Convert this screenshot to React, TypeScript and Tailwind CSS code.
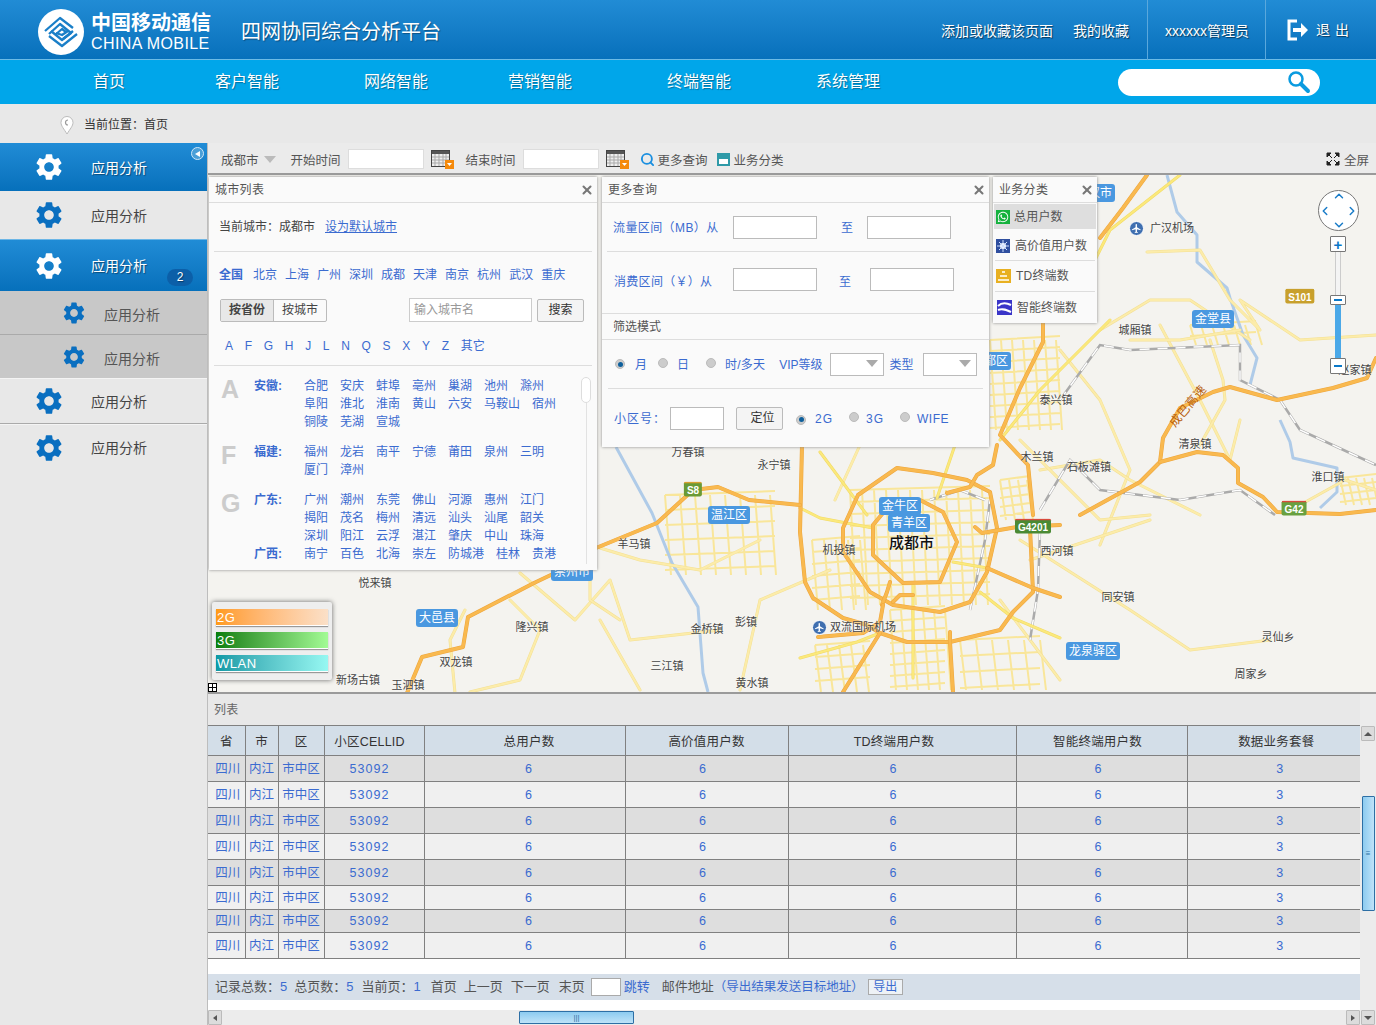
import type { ReactNode } from 'react';
import { FaWhatsapp } from 'react-icons/fa';
import { MdSettings, MdFlight } from 'react-icons/md';
import { Search, ChevronUp, ChevronDown, ChevronLeft, ChevronRight, X } from 'lucide-react';

const highways = [
  'M1080 515L1140 482L1160 462L1163 438L1180 408L1213 392L1230 387L1277 400L1333 388L1367 378L1376 358',
  'M1160 462L1197 452L1223 455L1238 468L1238 483L1263 497L1277 512L1340 514L1376 510',
  'M1147 175L1123 208L1100 238',
  'M1043 318L1043 342L1020 388L1000 435L1028 465L1033 515',
  'M920 500L943 512L957 542L940 582L903 583L873 555L873 525L883 513',
  'M897 468L933 473L967 480L990 492L997 528L987 572L970 602L940 612L893 605L870 592L843 552L843 528L858 495Z',
  'M802 445L800 532L805 582L813 598L843 618L867 625L880 633L907 642L950 642L1000 630L1013 612L1033 592L1030 528',
  'M987 568L1033 588L1060 597M975 527L982 533L1017 527L1060 525',
  'M947 493L970 487L977 475L993 465L997 445',
  'M880 633L843 692M882 605L887 592L890 582M893 602L900 595L913 595',
  'M950 632L950 642L953 692',
  'M818 637L863 633L880 622L883 605',
  'M596 548L657 523L693 490L718 487L749 500L800 505',
  'M407 693L422 657L463 647L468 617L534 583L555 573',
];
const yellows = [
  'M913 585L913 678M820 452L867 515M955 445L937 498',
  'M800 508L820 518L873 528M953 562L987 568M980 592L1013 618L1060 638',
  'M800 658L857 642L880 633M1075 300L1100 250L1110 230L1180 175',
  'M1000 440L1040 390L1090 340L1110 320',
];
const palestreets = [
  'M1147 252L1200 250L1230 300L1260 330L1240 300L1300 340L1376 335',
  'M1100 330L1150 300L1190 300L1250 340',
  'M1060 350L1100 400L1130 470L1100 545',
  'M1160 325L1200 400L1230 460L1240 420',
  'M1210 340L1223 380L1225 400L1200 445',
  'M1040 470L1100 460L1130 480L1200 515',
  'M1020 440L1100 520L1150 515',
  'M1300 505L1345 480L1376 490',
  'M1130 340L1180 340L1240 330',
  'M455 693L450 640L465 610M520 573L575 620L610 580L630 640L720 630',
  'M510 600L540 630L520 680L470 692',
  'M600 548L640 560L700 570L760 540',
  'M590 520L590 600L620 620',
  'M740 690L760 600L830 570',
  'M1000 600L1060 680M1030 560L1150 520',
  'M1020 540L1130 610L1190 650L1270 640',
  'M600 620L640 690M860 445L835 500',
];
const rivers = [
  'M1167 175L1177 212L1197 235L1197 262L1227 288L1230 298L1243 335L1257 358L1250 385',
  'M1280 420L1290 442L1293 458L1337 468L1337 492L1320 508',
  'M616 447L652 513L672 563L698 607L703 673L708 692',
];
const rails = [
  'M1060 400L1100 345L1130 350L1240 345L1240 380L1280 400L1300 430L1376 465',
  'M1040 510L1070 460L1100 490L1180 500L1240 490L1275 515',
  'M1040 530L1038 590L1030 640M985 500L960 490L930 500M970 610L985 540L990 500',
];

function grid(x0: number, y0: number, x1: number, y1: number, step: number) {
  let d = '';
  for (let x = x0; x <= x1; x += step) d += `M${x} ${y0}L${x + 6} ${y1}`;
  for (let y = y0; y <= y1; y += step) d += `M${x0} ${y}L${x1} ${y - 4}`;
  return d;
}

const blocks = [
  grid(665, 495, 775, 575, 15),
  grid(850, 490, 990, 605, 12),
  grid(812, 540, 860, 610, 12),
  grid(815, 645, 870, 692, 12),
  grid(890, 610, 945, 690, 11),
  grid(960, 640, 1040, 690, 16),
  grid(1000, 480, 1030, 520, 9),
  grid(990, 340, 1060, 430, 11),
  grid(1190, 325, 1256, 345, 11),
  grid(1340, 478, 1376, 505, 8),
];

const towns: [string, number, number][] = [
  ['悦来镇', 375, 583], ['隆兴镇', 532, 627], ['双龙镇', 456, 662], ['新场古镇', 358, 680],
  ['玉泗镇', 408, 685], ['羊马镇', 634, 544], ['金桥镇', 707, 629], ['彭镇', 746, 622],
  ['三江镇', 667, 666], ['黄水镇', 752, 683], ['万春镇', 688, 452], ['永宁镇', 774, 465],
  ['机投镇', 839, 550], ['双流国际机场', 863, 627], ['西河镇', 1057, 551], ['同安镇', 1118, 597],
  ['灵仙乡', 1278, 637], ['周家乡', 1251, 674], ['木兰镇', 1037, 457], ['石板滩镇', 1089, 467],
  ['泰兴镇', 1056, 400], ['城厢镇', 1135, 330], ['清泉镇', 1195, 444], ['淮口镇', 1328, 477],
  ['赵家镇', 1355, 370], ['广汉机场', 1172, 228],
];
const districts: [string, number, number][] = [
  ['崇州市', 572, 572], ['金牛区', 900, 506], ['青羊区', 909, 523], ['温江区', 729, 515], ['大邑县', 437, 618],
  ['龙泉驿区', 1093, 651], ['金堂县', 1213, 319], ['郫都区', 990, 361], ['广汉市', 1094, 193],
];

const cityGroups = [
  { letter: 'A', name: '安徽:', rows: [['合肥', '安庆', '蚌埠', '亳州', '巢湖', '池州', '滁州'], ['阜阳', '淮北', '淮南', '黄山', '六安', '马鞍山', '宿州'], ['铜陵', '芜湖', '宣城']], cls: 'mb-3' },
  { letter: 'F', name: '福建:', rows: [['福州', '龙岩', '南平', '宁德', '莆田', '泉州', '三明'], ['厦门', '漳州']], cls: 'mb-3' },
  { letter: 'G', name: '广东:', rows: [['广州', '潮州', '东莞', '佛山', '河源', '惠州', '江门'], ['揭阳', '茂名', '梅州', '清远', '汕头', '汕尾', '韶关'], ['深圳', '阳江', '云浮', '湛江', '肇庆', '中山', '珠海']], cls: '' },
  { letter: '', name: '广西:', rows: [['南宁', '百色', '北海', '崇左', '防城港', '桂林', '贵港']], cls: '' },
];

const rowHeights = ['h-[26px]', 'h-[26px]', 'h-[26px]', 'h-[26px]', 'h-[26px]', 'h-[24px]', 'h-[23px]', 'h-[26px]'];

function Gear({ className }: { className: string }) {
  return <MdSettings className={className} />;
}

function SideItem({ active, sub, className, children }: { active?: boolean; sub?: boolean; className: string; children?: ReactNode }) {
  const tone = active
    ? 'bg-gradient-to-b from-[#208cd6] to-[#0670bb] text-white [text-shadow:1px_1px_1px_#0006]'
    : sub
      ? 'bg-[#c8c8c8] text-[#555]'
      : 'bg-[#e8e8e8] text-[#444]';
  return (
    <div className={`relative flex items-center shrink-0 ${tone} ${className}`}>
      <Gear
        className={`shrink-0 ${active ? 'text-white' : 'text-[#0a6fc0]'} ${sub ? 'ml-[61px] w-[26px] h-[26px]' : 'ml-[33px] w-[32px] h-[32px]'}`}
      />
      <span className={`text-[14px] ${sub ? 'ml-[17px] pt-[5px]' : 'ml-[26px] pt-[2px]'}`}>应用分析</span>
      {children}
    </div>
  );
}

function Calendar() {
  return (
    <svg width="23" height="19" viewBox="0 0 23 19" className="shrink-0">
      <rect x="0.5" y="0.5" width="18" height="16" fill="#eee" stroke="#444" />
      <rect x="1" y="1" width="17" height="3" fill="#555" />
      <path d="M4 4v12M8 4v12M12 4v12M15 4v12M1 7h17M1 10h17M1 13h17" stroke="#a9a9a9" strokeWidth="1" />
      <rect x="14" y="10" width="9" height="9" fill="#f58a0b" />
      <path d="M16 13h5l-2.5 3z" fill="#fff" />
    </svg>
  );
}

function Radio({ on }: { on?: boolean }) {
  return (
    <span className="inline-flex w-[10px] h-[10px] rounded-full items-center justify-center bg-[#ccc] border border-[#bbb] shrink-0">
      {on && <span className="w-[5px] h-[5px] rounded-full bg-[#0d5f9c]" />}
    </span>
  );
}

function Field({ className }: { className: string }) {
  return <div className={`bg-white border border-[#bbb] shrink-0 ${className}`} />;
}

function Picker({ className }: { className: string }) {
  return (
    <div className={`bg-white border border-[#bbb] shrink-0 flex items-start justify-end pr-[5px] pt-[6px] ${className}`}>
      <span className="w-0 h-0 border-x-[6px] border-x-transparent border-t-[7px] border-t-[#aaa]" />
    </div>
  );
}

function PanelHead({ title }: { title: string }) {
  return (
    <div className="h-[26px] border-b border-[#ddd] flex items-center justify-between pl-[6px] pr-[3px] text-[12px] text-[#555]">
      <span className="tracking-[0.3px]">{title}</span>
      <X className="w-[14px] h-[14px] text-[#777]" strokeWidth={3.5} />
    </div>
  );
}

function CityPanel() {
  return (
    <div className="absolute left-[1px] top-[2px] w-[388px] h-[393px] bg-[#fafafa] shadow-[0_0_3px_#888] overflow-hidden z-10">
      <PanelHead title="城市列表" />
      <div className="px-[5px]">
        <div className="h-[49px] border-b border-[#ddd] flex items-center pl-[5px] text-[12px] text-[#444]">
          当前城市：成都市
          <span className="ml-[10px] text-[#3b6bd0] underline">设为默认城市</span>
        </div>
        <div className="flex gap-x-[8px] pl-[5px] pt-[14px] text-[12px] text-[#3b6bd0] h-[46px]">
          <b className="w-[26px]">全国</b>
          {['北京', '上海', '广州', '深圳', '成都', '天津', '南京', '杭州', '武汉', '重庆'].map((c) => (
            <span key={c}>{c}</span>
          ))}
        </div>
        <div className="flex items-center h-[24px] pl-[6px] text-[12px]">
          <div className="flex border border-[#bbb] rounded-[2px] h-[23px] items-center text-[#444]">
            <b className="bg-[#e8e8e8] w-[53px] text-center leading-[21px] border-r border-[#bbb]">按省份</b>
            <span className="w-[52px] text-center">按城市</span>
          </div>
          <div className="ml-[82px] w-[123px] h-[24px] bg-white border border-[#ccc] flex items-center pl-[4px] text-[#999]">输入城市名</div>
          <div className="ml-[5px] w-[47px] h-[23px] bg-[#f4f4f4] border border-[#bbb] rounded-[2px] flex items-center justify-center text-[#333]">搜索</div>
        </div>
        <div className="h-[44px] border-b border-[#ddd] flex items-center gap-x-[11.7px] pl-[11px] pt-[4px] text-[12px] text-[#3b6bd0]">
          {['A', 'F', 'G', 'H', 'J', 'L', 'N', 'Q', 'S', 'X', 'Y', 'Z', '其它'].map((c) => (
            <span key={c}>{c}</span>
          ))}
        </div>
        <div className="pt-[11px] text-[12px] text-[#3b6bd0] leading-[18px]">
          {cityGroups.map((g) => (
            <div key={g.name} className={`flex ${g.cls}`}>
              <span className="w-[40px] pl-[7px] text-[25px] font-bold text-[#ccc] leading-[24px] [font-family:'Liberation_Sans',sans-serif]">{g.letter}</span>
              <b className="w-[50px]">{g.name}</b>
              <div>
                {g.rows.map((r, i) => (
                  <div key={i} className="flex gap-x-[12px]">
                    {r.map((c) => (
                      <span key={c}>{c}</span>
                    ))}
                  </div>
                ))}
              </div>
            </div>
          ))}
        </div>
      </div>
      <div className="absolute left-[377px] top-[200px] bottom-[6px] w-px bg-[#e2e2e2]" />
      <div className="absolute left-[372px] top-[200px] w-[10px] h-[26px] rounded-[5px] bg-white border border-[#ddd]" />
    </div>
  );
}

function MorePanel() {
  return (
    <div className="absolute left-[394px] top-[2px] w-[387px] h-[270px] bg-[#fafafa] shadow-[0_0_3px_#888] text-[12px] text-[#3b6bd0] z-10">
      <PanelHead title="更多查询" />
      <div className="mx-[5px] h-[49px] border-b border-[#ddd] flex items-center pl-[6px]">
        <span className="w-[120px] tracking-[0.4px] pt-[2px]">流量区间（MB）从</span>
        <Field className="w-[84px] h-[23px]" />
        <span className="ml-[24px] w-[26px] pt-[2px]">至</span>
        <Field className="w-[84px] h-[23px]" />
      </div>
      <div className="h-[62px] border-b border-[#ddd] flex items-start pl-[12px] pt-[16px]">
        <span className="w-[119px] tracking-[0.3px] pt-[5px]">消费区间（￥）从</span>
        <Field className="w-[84px] h-[23px]" />
        <span className="ml-[22px] w-[31px] pt-[5px]">至</span>
        <Field className="w-[84px] h-[23px]" />
      </div>
      <div className="h-[26px] border-b border-[#ddd] flex items-center pl-[11px] text-[#555]">筛选模式</div>
      <div className="mx-[6px] h-[49px] border-b border-[#ddd] flex items-center pl-[7px]">
        <Radio on />
        <span className="ml-[10px] pt-[1px]">月</span>
        <span className="ml-[11px]"><Radio /></span>
        <span className="ml-[9px] pt-[1px]">日</span>
        <span className="ml-[17px]"><Radio /></span>
        <span className="ml-[9px] tracking-[0.2px] pt-[1px]">时/多天</span>
        <span className="ml-[14px] pt-[1px]">VIP等级</span>
        <Picker className="ml-[7px] w-[54px] h-[23px]" />
        <span className="ml-[6px] pt-[1px]">类型</span>
        <Picker className="ml-[9px] w-[54px] h-[23px]" />
      </div>
      <div className="h-[56px] flex items-center pl-[12px] pt-[2px]">
        <span className="w-[56px] tracking-[1px] pt-[2px]">小区号：</span>
        <Field className="w-[54px] h-[23px]" />
        <div className="ml-[12px] w-[47px] h-[23px] bg-[#f4f4f4] border border-[#bbb] rounded-[2px] flex items-center justify-center text-[#333] pl-[6px]">定位</div>
        <span className="ml-[13px]"><Radio on /></span>
        <span className="ml-[9px] tracking-[1px] pt-[1px]">2G</span>
        <span className="ml-[16px]"><Radio /></span>
        <span className="ml-[7px] tracking-[1px] pt-[1px]">3G</span>
        <span className="ml-[16px]"><Radio /></span>
        <span className="ml-[7px] tracking-[0.5px] pt-[1px]">WIFE</span>
      </div>
    </div>
  );
}

function BizPanel() {
  return (
    <div className="absolute left-[785px] top-[2px] w-[104px] h-[146px] bg-[#fafafa] shadow-[0_0_3px_#888] text-[12px] text-[#555] z-10">
      <PanelHead title="业务分类" />
      <div className="mx-[1px] mt-[1px] h-[25px] bg-[#dedede] flex items-center pl-[2px]">
        <span className="w-[14px] h-[14px] bg-[#16b23e] flex items-center justify-center text-white"><FaWhatsapp className="w-[12px] h-[12px]" /></span>
        <span className="ml-[4px] tracking-[0.2px]">总用户数</span>
      </div>
      <div className="mx-[2px] mt-[2px] h-[30px] border-b border-[#ddd] flex items-center pl-[1px]">
        <svg width="14" height="14" viewBox="0 0 14 14">
          <rect width="14" height="14" fill="#2f4f9f" />
          <circle cx="7" cy="7" r="3" fill="#fff" />
          <path d="M7 1v12M1 7h12M3 3l8 8M11 3l-8 8" stroke="#cfe0ff" strokeWidth="1" />
        </svg>
        <span className="ml-[5px]">高价值用户数</span>
      </div>
      <div className="mx-[2px] h-[31px] border-b border-[#ddd] flex items-center pl-[1px]">
        <svg width="15" height="14" viewBox="0 0 15 14">
          <rect width="15" height="14" fill="#e8b021" />
          <path d="M6 3h3M4 7h7M2 11h11" stroke="#fff" strokeWidth="1.5" />
        </svg>
        <span className="ml-[5px] tracking-[0.2px]">TD终端数</span>
      </div>
      <div className="h-[31px] flex items-center pl-[4px]">
        <svg width="15" height="15" viewBox="0 0 15 15">
          <rect width="15" height="15" fill="#3a35c8" />
          <path d="M1 6c4-4 9-3 13-1M1 10c5-2 9 0 13 2" stroke="#fff" strokeWidth="2" fill="none" />
        </svg>
        <span className="ml-[5px]">智能终端数</span>
      </div>
    </div>
  );
}

function Legend() {
  const bars = [
    ['2G', 'from-[#ff9a14] to-[#fbe0c8]'],
    ['3G', 'from-[#067f0b] to-[#a2fb94]'],
    ['WLAN', 'from-[#0b9aa6] to-[#96f8f2]'],
  ];
  return (
    <div className="absolute left-[4px] top-[427px] w-[120px] h-[78px] bg-[#eeeeee] rounded-[2px] shadow-[0_0_5px_#666] px-[4px] py-[7px] flex flex-col gap-[6px] z-10">
      {bars.map(([n, c]) => (
        <div key={n} className={`h-[17px] bg-gradient-to-r ${c} text-white text-[13px] leading-[17px] pl-[1px] border-b border-white tracking-[0.5px] shadow-[0_1px_1px_#999]`}>
          {n}
        </div>
      ))}
    </div>
  );
}

function MapControls() {
  return (
    <div className="absolute left-[1110px] top-[15px] w-[40px] flex flex-col items-center">
      <div className="relative w-[41px] h-[41px] rounded-full bg-white border border-[#777] text-[#1a7cc8]">
        <ChevronUp className="absolute left-[13px] top-[-2px] w-[14px] h-[14px]" strokeWidth={2.5} />
        <ChevronDown className="absolute left-[13px] bottom-[-2px] w-[14px] h-[14px]" strokeWidth={2.5} />
        <ChevronLeft className="absolute left-[-1px] top-[13px] w-[14px] h-[14px]" strokeWidth={2.5} />
        <ChevronRight className="absolute right-[-1px] top-[13px] w-[14px] h-[14px]" strokeWidth={2.5} />
      </div>
      <div className="mt-[5px] w-[16px] h-[16px] bg-white border border-[#777] rounded-[1px] flex items-center justify-center text-[#0a78c8] text-[15px] font-bold leading-none">+</div>
      <div className="w-[6px] h-[43px] bg-[#f4f4f4] border-x border-[#ccc]" />
      <div className="w-[16px] h-[10px] bg-white border border-[#777] rounded-[1px] flex items-center justify-center">
        <span className="w-[8px] h-[2px] bg-[#0a78c8]" />
      </div>
      <div className="w-[6px] h-[53px] bg-[#4aa8e8]" />
      <div className="w-[16px] h-[16px] bg-white border border-[#777] rounded-[1px] flex items-center justify-center">
        <span className="w-[8px] h-[2px] bg-[#0a78c8]" />
      </div>
    </div>
  );
}

function Road({ d, out, fill, w }: { d: string; out: string; fill: string; w: number }) {
  return (
    <>
      <path d={d} fill="none" stroke={out} strokeWidth={w + 1} strokeLinejoin="round" strokeLinecap="round" />
      <path d={d} fill="none" stroke={fill} strokeWidth={w} strokeLinejoin="round" strokeLinecap="round" />
    </>
  );
}

function Shield({ text, x, y, color }: { text: string; x: number; y: number; color: string }) {
  return (
    <span
      className={`absolute -translate-x-1/2 -translate-y-1/2 px-[3px] h-[15px] rounded-[2px] text-white text-[10px] font-bold leading-[13px] whitespace-nowrap border-t-2 ${color}`}
      style={{ left: x - 208, top: y - 175 }}
    >
      {text}
    </span>
  );
}

function MapView() {
  return (
    <div className="relative flex-1 bg-[#f4f3ef] overflow-hidden">
      <svg className="absolute inset-0 w-full h-full" viewBox="208 175 1168 517">
        {blocks.map((d, i) => (
          <path key={i} d={d} fill="none" stroke="#f9e69a" strokeWidth="2" />
        ))}
        {rivers.map((d) => (
          <path key={d} d={d} fill="none" stroke="#afcbe8" strokeWidth="3" strokeLinejoin="round" />
        ))}
        {palestreets.map((d) => (
          <Road key={d} d={d} out="#f3e094" fill="#fcecaa" w={2} />
        ))}
        {rails.map((d) => (
          <g key={d}>
            <path d={d} fill="none" stroke="#aaa" strokeWidth="2.5" />
            <path d={d} fill="none" stroke="#fff" strokeWidth="1.5" strokeDasharray="10 8" />
          </g>
        ))}
        {yellows.map((d) => (
          <Road key={d} d={d} out="#f2da66" fill="#fbe97c" w={2} />
        ))}
        {highways.map((d) => (
          <Road key={d} d={d} out="#eda63e" fill="#f9b94f" w={3} />
        ))}
      </svg>
      {towns.map(([t, x, y]) => (
        <span
          key={t}
          className="absolute -translate-x-1/2 -translate-y-1/2 text-[11px] text-[#444] whitespace-nowrap [text-shadow:0_0_2px_#fff]"
          style={{ left: x - 208, top: y - 175 }}
        >
          {t}
        </span>
      ))}
      {districts.map(([t, x, y]) => (
        <span
          key={t}
          className="absolute -translate-x-1/2 -translate-y-1/2 px-[3px] h-[18px] rounded-[3px] bg-[#4a98e0] text-white text-[12px] leading-[18px] whitespace-nowrap"
          style={{ left: x - 208, top: y - 175 }}
        >
          {t}
        </span>
      ))}
      <span className="absolute left-[681px] top-[357px] text-[15px] font-medium text-[#111] [text-shadow:0_0_3px_#fff]">成都市</span>
      <span className="absolute left-[955px] top-[222px] -rotate-[50deg] text-[12px] text-[#b8600c] tracking-[0.5px]">成巴高速</span>
      <Shield text="S8" x={693} y={489} color="bg-[#6a9a36] border-[#d8a030]" />
      <Shield text="G4201" x={1033} y={526} color="bg-[#4a8a34] border-[#d84a3c]" />
      <Shield text="G42" x={1294} y={508} color="bg-[#68a040] border-[#d84a3c]" />
      <Shield text="S101" x={1300} y={296} color="bg-[#c8a02c] border-[#c8a02c]" />
      <span className="absolute left-[604px] top-[445px] w-[15px] h-[15px] rounded-full bg-[#3f6fb0] border border-white flex items-center justify-center text-white"><MdFlight className="w-[11px] h-[11px]" /></span>
      <span className="absolute left-[921px] top-[46px] w-[15px] h-[15px] rounded-full bg-[#3f6fb0] border border-white flex items-center justify-center text-white"><MdFlight className="w-[11px] h-[11px]" /></span>
      <CityPanel />
      <MorePanel />
      <BizPanel />
      <Legend />
      <MapControls />
      <div className="absolute left-0 bottom-0 w-[9px] h-[9px] border border-black bg-white z-10 [background-image:linear-gradient(#000,#000),linear-gradient(#000,#000)] [background-size:100%_1px,1px_100%] bg-center bg-no-repeat" />
    </div>
  );
}

function ScrollButton({ children, className }: { children: ReactNode; className: string }) {
  return (
    <div className={`w-[14px] h-[15px] bg-[#dcdcdc] border border-[#bbb] rounded-[1px] flex items-center justify-center shrink-0 ${className}`}>
      {children}
    </div>
  );
}

function DataTable() {
  const heads = ['省', '市', '区', '小区CELLID', '总用户数', '高价值用户数', 'TD终端用户数', '智能终端用户数', '数据业务套餐'];
  const cols = ['w-[37px]', 'w-[33px]', 'w-[46px]', 'w-[100px]', 'w-[201px]', 'w-[163px]', 'w-[228px]', 'w-[171px]', 'w-[173px]'];
  const values = ['四川', '内江', '市中区', '53092', '6', '6', '6', '6', '3'];
  const headPad = ['', '', '', 'pr-[9px]', 'pl-[9px]', '', 'pr-[16px]', 'pr-[8px]', 'pl-[5px]'];
  const cellPad = ['pl-[3px]', '', '', 'pr-[9px]', 'pl-[8px]', 'pr-[8px]', 'pr-[18px]', 'pr-[7px]', 'pl-[12px]'];
  return (
    <table className="table-fixed border-collapse w-[1152px] text-center text-[12.5px]">
      <colgroup>
        {cols.map((c, i) => (
          <col key={i} className={c} />
        ))}
      </colgroup>
      <thead>
        <tr className="h-[30px] bg-[#d3dee8] text-[#333]">
          {heads.map((h, i) => (
            <th key={h} className={`font-normal tracking-[0.2px] pt-[3px] border-y border-[#808080] ${i === 0 ? '' : 'border-l'} ${headPad[i]}`}>
              {h}
            </th>
          ))}
        </tr>
      </thead>
      <tbody>
        {rowHeights.map((h, r) => (
          <tr key={r} className={`${h} ${r % 2 === 0 ? 'bg-[#dedede]' : 'bg-[#f0f0f0]'} text-[#3b6bd0]`}>
            {values.map((v, i) => (
              <td key={i} className={`p-0 pt-[1px] border-y border-[#808080] ${i === 0 ? '' : 'border-l'} ${i === 3 ? 'tracking-[1px]' : ''} ${i < 3 ? 'whitespace-nowrap' : ''} ${cellPad[i]}`}>
                {v}
              </td>
            ))}
          </tr>
        ))}
      </tbody>
    </table>
  );
}

function Pager() {
  return (
    <div className="mt-[15px] h-[26px] bg-[#d6dfe9] flex items-center pl-[7px] text-[13px] text-[#555] whitespace-nowrap">
      <span>记录总数：<i className="not-italic text-[#3b6bd0]">5</i></span>
      <span className="ml-[7px]">总页数：<i className="not-italic text-[#3b6bd0]">5</i></span>
      <span className="ml-[8px]">当前页：<i className="not-italic text-[#3b6bd0]">1</i></span>
      <span className="ml-[10px]">首页</span>
      <span className="ml-[7px]">上一页</span>
      <span className="ml-[8px]">下一页</span>
      <span className="ml-[9px]">末页</span>
      <div className="ml-[6px] w-[30px] h-[18px] bg-white border border-[#aaa]" />
      <span className="ml-[3px] text-[#3b6bd0]">跳转</span>
      <span className="ml-[12px]">邮件地址</span>
      <span className="text-[12.5px] text-[#3b6bd0]">（导出结果发送目标地址）</span>
      <div className="ml-[4px] w-[35px] h-[16px] bg-[#eef2f6] border border-[#aaa] flex items-center justify-center text-[12px] text-[#3b6bd0]">导出</div>
    </div>
  );
}

function ListSection() {
  return (
    <div className="h-[333px] shrink-0 bg-white border-t-2 border-[#9a9a9a] flex overflow-hidden">
      <div className="w-[1152px] flex flex-col shrink-0">
        <div className="h-[31px] bg-[#e8e8e8] flex items-center pl-[6px] text-[12px] text-[#666] tracking-[0.3px] shrink-0">列表</div>
        <DataTable />
        <Pager />
        <div className="mt-auto h-[15px] bg-[#ececec] flex items-center">
          <ScrollButton className="text-[#555]"><span className="w-0 h-0 border-y-[3px] border-y-transparent border-r-[4px] border-r-[#555]" /></ScrollButton>
          <div className="ml-[297px] w-[115px] h-[13px] bg-gradient-to-b from-[#8ccbf0] to-[#bfe3f8] border border-[#2d6fa5] rounded-[1px] flex items-center justify-center text-[#2d6fa5] text-[8px] leading-none">|||</div>
          <ScrollButton className="ml-auto"><span className="w-0 h-0 border-y-[3px] border-y-transparent border-l-[4px] border-l-[#555]" /></ScrollButton>
        </div>
      </div>
      <div className="w-[16px] bg-[#ececec] flex flex-col items-center pt-[32px] pb-0">
        <ScrollButton className=""><span className="w-0 h-0 border-x-[4px] border-x-transparent border-b-[4px] border-b-[#555]" /></ScrollButton>
        <div className="mt-[55px] w-[13px] h-[115px] bg-gradient-to-r from-[#8ccbf0] to-[#bfe3f8] border border-[#2d6fa5] rounded-[1px] flex items-center justify-center text-[#2d6fa5] text-[8px] leading-[3px]">≡</div>
        <ScrollButton className="mt-auto"><span className="w-0 h-0 border-x-[4px] border-x-transparent border-t-[4px] border-t-[#555]" /></ScrollButton>
      </div>
    </div>
  );
}

function Logo() {
  return (
    <svg width="46" height="46" viewBox="0 0 46 46" className="shrink-0">
      <circle cx="23" cy="23" r="23" fill="#fff" />
      <g fill="none" stroke="#1a7fc8" strokeWidth="2.3" strokeLinejoin="round">
        <path d="M7 22L22 9L35 19" />
        <path d="M11 25L22 15L33 24L25 30" />
        <path d="M17 26L24 20L28 23" />
        <path d="M39 25L24 37L11 27" />
        <path d="M35 22L24 31L13 22" />
        <path d="M18 24L24 26L30 22" />
      </g>
    </svg>
  );
}

function TopBar() {
  return (
    <div className="h-[60px] shrink-0 bg-gradient-to-b from-[#218cd5] to-[#0670bb] border-b border-[#6cbbe6] flex items-center text-white pl-[38px] pt-[4px]">
      <Logo />
      <div className="ml-[7px] w-[122px]">
        <div className="text-[20px] font-bold leading-[24px] whitespace-nowrap">中国移动通信</div>
        <div className="text-[16px] font-medium leading-[18px] tracking-[0.4px] whitespace-nowrap [font-family:'Liberation_Sans',sans-serif]">CHINA MOBILE</div>
      </div>
      <div className="ml-[28px] text-[20px] [text-shadow:1px_1px_1px_#0005]">四网协同综合分析平台</div>
      <div className="ml-auto flex items-center h-[60px] -mt-[4px] text-[14px] [text-shadow:1px_1px_1px_#0008]">
        <span className="pt-[4px]">添加或收藏该页面</span>
        <span className="ml-[20px] pt-[4px]">我的收藏</span>
        <div className="ml-[18px] h-full border-l border-[#5aa8dc] pl-[17px] pr-[16px] flex items-center">
          <span className="pt-[4px]">xxxxxx管理员</span>
        </div>
        <div className="h-full border-l border-[#5aa8dc] pl-[21px] pr-[22px] flex items-center">
          <svg width="22" height="22" viewBox="0 0 22 22">
            <path d="M10 2H2v18h8" fill="none" stroke="#fff" strokeWidth="3" />
            <path d="M6 9h8V4l7 7-7 7v-5H6z" fill="#fff" />
          </svg>
          <span className="ml-[7px] tracking-[5px] pt-[2px]">退出</span>
        </div>
      </div>
    </div>
  );
}

function NavBar() {
  const items = [
    ['首页', 'ml-[93px]'], ['客户智能', 'ml-[90px]'], ['网络智能', 'ml-[85px]'],
    ['营销智能', 'ml-[80px]'], ['终端智能', 'ml-[95px]'], ['系统管理', 'ml-[85px]'],
  ];
  return (
    <div className="h-[44px] shrink-0 bg-[#00a6ea] flex items-center text-[16px] text-white [text-shadow:1px_1px_1px_#0005]">
      {items.map(([t, c]) => (
        <span key={t} className={c}>{t}</span>
      ))}
      <div className="ml-auto mr-[56px] w-[202px] h-[27px] bg-white rounded-full flex items-center justify-end pr-[9px]">
        <svg width="24" height="24" viewBox="0 0 24 24">
          <circle cx="9" cy="9" r="6.5" fill="none" stroke="#0a9be0" strokeWidth="2.5" />
          <path d="M14 14l7 7" stroke="#0a9be0" strokeWidth="4" strokeLinecap="round" />
        </svg>
      </div>
    </div>
  );
}

function Toolbar() {
  return (
    <div className="h-[32px] shrink-0 bg-[#ebebeb] border-b-2 border-[#9a9a9a] flex items-center pl-[13px] pr-[7px] text-[12.5px] text-[#555] whitespace-nowrap pt-[2px]">
      <span className="pt-[4px]">成都市</span>
      <span className="ml-[5px] w-0 h-0 border-x-[6px] border-x-transparent border-t-[7px] border-t-[#bbb]" />
      <span className="ml-[15px] pt-[4px]">开始时间</span>
      <Field className="ml-[7px] w-[76px] h-[20px] !border-[#ddd]" />
      <span className="ml-[7px]"><Calendar /></span>
      <span className="ml-[12px] pt-[4px]">结束时间</span>
      <Field className="ml-[7px] w-[76px] h-[20px] !border-[#ddd]" />
      <span className="ml-[7px]"><Calendar /></span>
      <Search className="ml-[11px] w-[15px] h-[15px] text-[#1a8fe0]" strokeWidth={3} />
      <span className="ml-[3px] pt-[4px]">更多查询</span>
      <span className="ml-[9px] w-[13px] h-[13px] bg-[#2f9aa8] flex items-end justify-center pb-[2px]">
        <span className="w-[9px] h-[5px] bg-white" />
      </span>
      <span className="ml-[4px] pt-[4px]">业务分类</span>
      <svg width="14" height="14" viewBox="0 0 14 14" className="ml-auto">
        <path d="M1 1h4L1 5zM13 1v4L9 1zM1 13V9l4 4zM13 13H9l4-4zM3 3l3 3M11 3L8 6M3 11l3-3M11 11L8 8" fill="#222" stroke="#222" strokeWidth="1" />
      </svg>
      <span className="ml-[4px] pt-[4px]">全屏</span>
    </div>
  );
}

function Sidebar() {
  return (
    <div className="w-[208px] shrink-0 bg-[#e8e8e8] border-r border-[#bdbdbd] flex flex-col overflow-hidden">
      <SideItem active className="h-[48px]">
        <span className="absolute left-[191px] top-[4px] w-[13px] h-[13px] rounded-full border border-[#cfe6f6] bg-[#4a9fd8] flex items-center justify-center">
          <span className="w-0 h-0 border-y-[3px] border-y-transparent border-r-[5px] border-r-white" />
        </span>
      </SideItem>
      <SideItem className="h-[48px]" />
      <SideItem active className="h-[52px] border-t border-[#6cb6e6]">
        <span className="absolute left-[167px] top-[29px] w-[26px] h-[17px] rounded-full bg-[#0c5fa8] text-white text-[12px] leading-[17px] text-center">2</span>
      </SideItem>
      <SideItem sub className="h-[44px] border-b border-[#aaa]" />
      <SideItem sub className="h-[43px]" />
      <SideItem className="h-[46px] border-t border-[#f4f4f4] border-b border-b-[#aaa]" />
      <SideItem className="h-[46px] border-t border-[#f4f4f4]" />
    </div>
  );
}

export default function App() {
  return (
    <div className="w-[1376px] h-screen overflow-hidden flex flex-col bg-[#e8e8e8] [font-family:'Liberation_Sans','Noto_Sans_CJK_SC',sans-serif]">
      <TopBar />
      <NavBar />
      <div className="h-[39px] shrink-0 bg-[#e8e8e8] flex items-center pl-[60px] pt-[3px] text-[12px] text-[#333]">
        <svg width="14" height="19" viewBox="0 0 14 19">
          <path d="M7 18C4 13 1 10 1 6.5a6 6 0 0 1 12 0C13 10 10 13 7 18z" fill="#fff" stroke="#bbb" />
          <path d="M8 4a2.5 2.5 0 1 0 0 5" fill="none" stroke="#999" strokeWidth="1.2" />
        </svg>
        <span className="ml-[10px]">当前位置：首页</span>
      </div>
      <div className="flex-1 flex min-h-0">
        <Sidebar />
        <div className="flex-1 flex flex-col min-w-0">
          <Toolbar />
          <MapView />
          <ListSection />
        </div>
      </div>
    </div>
  );
}
